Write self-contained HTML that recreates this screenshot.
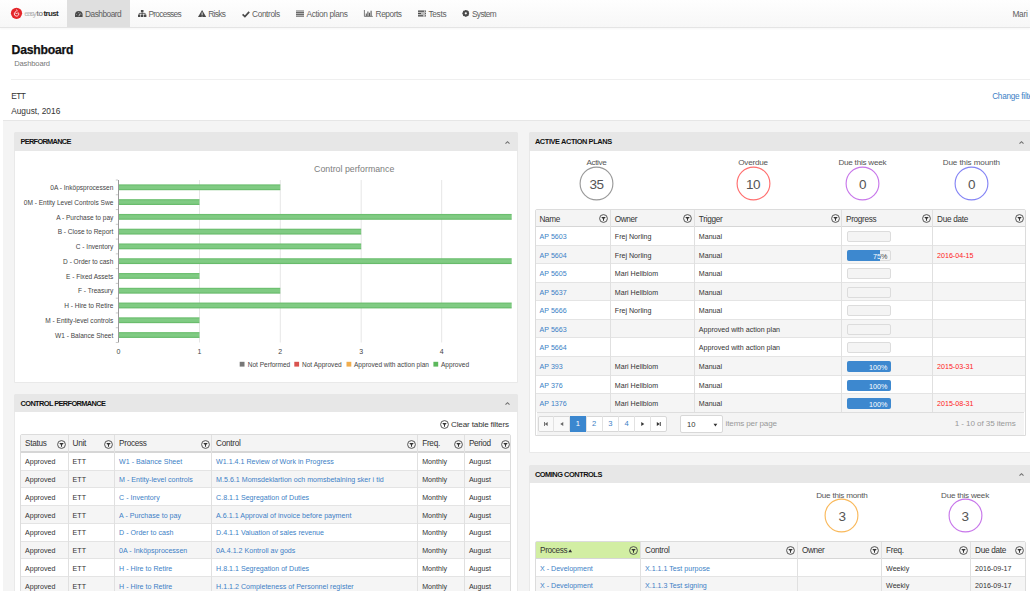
<!DOCTYPE html>
<html><head><meta charset="utf-8"><style>
html,body{margin:0;padding:0;}
body{width:1030px;height:591px;overflow:hidden;position:relative;background:#fff;font-family:"Liberation Sans", sans-serif;}
.t{position:absolute;white-space:nowrap;line-height:1;}
.r{position:absolute;}
svg{overflow:visible;display:block}
</style></head><body>
<div class="r" style="left:0.00px;top:0.00px;width:1030.00px;height:27.00px;background:linear-gradient(#fefefe,#f7f7f7);border-bottom:1px solid #e4e4e4;box-shadow:0 1px 2px rgba(0,0,0,0.04)"></div>
<div class="r" style="left:67.00px;top:0.00px;width:63.00px;height:27.00px;background:#dfdfdf"></div>
<svg class="r" style="left:10px;top:7px" width="13" height="13" viewBox="0 0 13 13"><circle cx="6.5" cy="6.3" r="5.6" fill="#e4262a"/><path d="M6.6 2.6 C7.6 3.4 6.6 4.2 5.9 4.6 C4.4 5.4 4 6.8 4.6 8 C5.3 9.4 7.7 9.5 8.5 8.1 C9.1 7 8.6 5.6 7.6 5.1" fill="none" stroke="#fff" stroke-width="0.9"/><path d="M5.6 7 L6.5 6 L7.4 7" fill="none" stroke="#fff" stroke-width="0.8"/></svg>
<div class="t" style="left:24.30px;top:10.00px;font-size:8px;color:#b5b5b5;font-weight:normal;letter-spacing:-1.475px;">easy</div>
<div class="t" style="left:36.40px;top:10.00px;font-size:8px;color:#666;font-weight:normal;letter-spacing:-0.136px;">to</div>
<div class="t" style="left:43.40px;top:10.00px;font-size:8px;color:#2a2a2a;font-weight:bold;letter-spacing:-0.636px;">trust</div>
<svg class="r" style="left:74.8px;top:10.8px" width="8" height="7" viewBox="0 0 8 7"><path d="M0 6.1 V3.8 A3.8 3.8 0 0 1 7.6 3.8 V6.1 Z" fill="#4a4a4a"/><path d="M3.8 5.2 L5.3 2.4" stroke="#dcdcdc" stroke-width="0.8"/><circle cx="1.6" cy="3.6" r="0.45" fill="#dcdcdc"/><circle cx="3.8" cy="1.5" r="0.45" fill="#dcdcdc"/><circle cx="6" cy="3.6" r="0.45" fill="#dcdcdc"/></svg>
<div class="t" style="left:85.10px;top:10.00px;font-size:8.3px;color:#5e5e5e;font-weight:normal;letter-spacing:-0.501px;">Dashboard</div>
<svg class="r" style="left:137.8px;top:10px" width="9" height="8" viewBox="0 0 9 8"><rect x="2.9" y="0" width="2.6" height="2.3" fill="#4a4a4a"/><path d="M4.2 2.3 V3.7 M1.2 3.4 H7.2 M1.2 3.4 V4.8 M4.2 3.4 V4.8 M7.2 3.4 V4.8" stroke="#4a4a4a" stroke-width="0.8"/><rect x="0" y="4.6" width="2.4" height="2.4" fill="#4a4a4a"/><rect x="3" y="4.6" width="2.4" height="2.4" fill="#4a4a4a"/><rect x="6" y="4.6" width="2.4" height="2.4" fill="#4a4a4a"/></svg>
<div class="t" style="left:148.40px;top:10.00px;font-size:8.3px;color:#5e5e5e;font-weight:normal;letter-spacing:-0.683px;">Processes</div>
<svg class="r" style="left:197.7px;top:9.8px" width="9" height="8" viewBox="0 0 9 8"><path d="M4.1 0 L8.2 7.1 H0 Z" fill="#4a4a4a"/><path d="M4.1 2.4 V5 M4.1 5.7 V6.5" stroke="#f4f4f4" stroke-width="0.9"/></svg>
<div class="t" style="left:208.20px;top:10.00px;font-size:8.3px;color:#5e5e5e;font-weight:normal;letter-spacing:-0.618px;">Risks</div>
<svg class="r" style="left:242px;top:10.6px" width="8" height="7" viewBox="0 0 8 7"><path d="M0.6 3.4 L2.9 5.6 L7.2 0.9" fill="none" stroke="#4a4a4a" stroke-width="1.7"/></svg>
<div class="t" style="left:252.10px;top:10.00px;font-size:8.3px;color:#5e5e5e;font-weight:normal;letter-spacing:-0.401px;">Controls</div>
<svg class="r" style="left:296px;top:9.9px" width="8" height="7" viewBox="0 0 8 7"><path d="M0 1 H8 M0 2.7 H8 M0 4.4 H8 M0 6.1 H8" stroke="#6a6a6a" stroke-width="1.2"/></svg>
<div class="t" style="left:306.50px;top:10.00px;font-size:8.3px;color:#5e5e5e;font-weight:normal;letter-spacing:-0.335px;">Action plans</div>
<svg class="r" style="left:364px;top:10.1px" width="9" height="7" viewBox="0 0 9 7"><path d="M0.4 0 V6.4 H8.8" fill="none" stroke="#5a5a5a" stroke-width="0.8"/><path d="M2.3 3.6 V6 M3.9 1.5 V6 M5.5 2.8 V6 M7.1 0.8 V6" stroke="#5a5a5a" stroke-width="1.1"/></svg>
<div class="t" style="left:375.60px;top:10.00px;font-size:8.3px;color:#5e5e5e;font-weight:normal;letter-spacing:-0.437px;">Reports</div>
<svg class="r" style="left:418px;top:9.9px" width="8" height="7" viewBox="0 0 8 7"><rect x="0" y="0" width="8" height="7" fill="#bdbdbd"/><path d="M0 1.3 H6 M0 3.5 H3 M0 5.7 H5" stroke="#4a4a4a" stroke-width="1.1"/><path d="M7.2 1.3 H8 M7.2 3.5 H8 M7.2 5.7 H8" stroke="#4a4a4a" stroke-width="1.1"/></svg>
<div class="t" style="left:428.40px;top:10.00px;font-size:8.3px;color:#5e5e5e;font-weight:normal;letter-spacing:-0.294px;">Tests</div>
<svg class="r" style="left:462.3px;top:10.1px" width="8" height="7" viewBox="0 0 8 7"><circle cx="3.8" cy="3.35" r="2.3" fill="none" stroke="#4a4a4a" stroke-width="1.8"/><path d="M3.8 0 V6.7 M0.5 3.35 H7.1 M1.4 1 L6.2 5.7 M6.2 1 L1.4 5.7" stroke="#4a4a4a" stroke-width="1.2"/><circle cx="3.8" cy="3.35" r="1.1" fill="#f7f7f7"/></svg>
<div class="t" style="left:471.90px;top:10.00px;font-size:8.3px;color:#5e5e5e;font-weight:normal;letter-spacing:-0.595px;">System</div>
<div class="t" style="left:1012.40px;top:10.00px;font-size:8.3px;color:#5e5e5e;font-weight:normal;letter-spacing:-0.235px;">Mari</div>
<div class="t" style="left:11.60px;top:44.00px;font-size:12.2px;color:#111;font-weight:bold;-webkit-text-stroke:0.25px #111;letter-spacing:-0.225px;">Dashboard</div>
<div class="t" style="left:14.20px;top:60.00px;font-size:7.6px;color:#777;font-weight:normal;letter-spacing:-0.164px;">Dashboard</div>
<div class="r" style="left:11.00px;top:79.00px;width:1019.00px;height:1.00px;background:#efefef"></div>
<div class="t" style="left:11.20px;top:92.00px;font-size:8.4px;color:#333;font-weight:normal;letter-spacing:-0.522px;">ETT</div>
<div class="t" style="left:11.20px;top:107.00px;font-size:8.33px;color:#333;font-weight:normal;">August, 2016</div>
<div class="t" style="left:992.20px;top:93.00px;font-size:8.2px;color:#3d7fc6;font-weight:normal;letter-spacing:-0.262px;">Change filter</div>
<div class="r" style="left:3.00px;top:120.00px;width:1027.00px;height:471.00px;background:#f4f4f4;border-top:1px solid #e6e6e6;box-sizing:border-box"></div>
<div class="r" style="left:14.00px;top:132.00px;width:504.00px;height:251.00px;background:#fff;border:1px solid #e9e9e9;box-sizing:border-box;border-radius:2px 2px 0 0"></div>
<div class="r" style="left:14.00px;top:132.00px;width:504.00px;height:19.00px;background:#e7e7e7;border-radius:2px 2px 0 0"></div>
<div class="t" style="left:20.50px;top:138.00px;font-size:7.4px;color:#111;font-weight:bold;letter-spacing:-0.697px;">PERFORMANCE</div>
<svg class="r" style="left:504.60px;top:140.70px" width="5" height="3" viewBox="0 0 5 3"><path d="M0.5 2.6 L2.5 0.7 L4.5 2.6" fill="none" stroke="#707070" stroke-width="1.1"/></svg>
<svg class="r" style="left:0;top:0" width="1030" height="591" viewBox="0 0 1030 591" font-family='"Liberation Sans", sans-serif'><line x1="199.50" y1="180" x2="199.50" y2="342.5" stroke="#e6e6e6" stroke-width="1"/><line x1="280.30" y1="180" x2="280.30" y2="342.5" stroke="#e6e6e6" stroke-width="1"/><line x1="361.20" y1="180" x2="361.20" y2="342.5" stroke="#e6e6e6" stroke-width="1"/><line x1="441.70" y1="180" x2="441.70" y2="342.5" stroke="#e6e6e6" stroke-width="1"/><defs><linearGradient id="bg" x1="0" y1="0" x2="0" y2="1"><stop offset="0" stop-color="#62b965"/><stop offset="0.3" stop-color="#80cb83"/><stop offset="0.7" stop-color="#80cb83"/><stop offset="1" stop-color="#5db460"/></linearGradient></defs><line x1="118.5" y1="180" x2="118.5" y2="342.5" stroke="#9a9a9a" stroke-width="1"/><line x1="115.8" y1="180.00" x2="118" y2="180.00" stroke="#bbb" stroke-width="0.8"/><line x1="115.8" y1="194.77" x2="118" y2="194.77" stroke="#bbb" stroke-width="0.8"/><line x1="115.8" y1="209.55" x2="118" y2="209.55" stroke="#bbb" stroke-width="0.8"/><line x1="115.8" y1="224.32" x2="118" y2="224.32" stroke="#bbb" stroke-width="0.8"/><line x1="115.8" y1="239.09" x2="118" y2="239.09" stroke="#bbb" stroke-width="0.8"/><line x1="115.8" y1="253.86" x2="118" y2="253.86" stroke="#bbb" stroke-width="0.8"/><line x1="115.8" y1="268.64" x2="118" y2="268.64" stroke="#bbb" stroke-width="0.8"/><line x1="115.8" y1="283.41" x2="118" y2="283.41" stroke="#bbb" stroke-width="0.8"/><line x1="115.8" y1="298.18" x2="118" y2="298.18" stroke="#bbb" stroke-width="0.8"/><line x1="115.8" y1="312.95" x2="118" y2="312.95" stroke="#bbb" stroke-width="0.8"/><line x1="115.8" y1="327.73" x2="118" y2="327.73" stroke="#bbb" stroke-width="0.8"/><line x1="115.8" y1="342.50" x2="118" y2="342.50" stroke="#bbb" stroke-width="0.8"/><rect x="119" y="184.40" width="161.30" height="5.8" fill="url(#bg)"/><text x="113.3" y="190.00" text-anchor="end" font-size="6.55" fill="#444">0A - Inköpsprocessen</text><rect x="119" y="199.17" width="80.50" height="5.8" fill="url(#bg)"/><text x="113.3" y="204.77" text-anchor="end" font-size="6.55" fill="#444">0M - Entity Level Controls Swe</text><rect x="119" y="213.95" width="392.70" height="5.8" fill="url(#bg)"/><text x="113.3" y="219.55" text-anchor="end" font-size="6.55" fill="#444">A - Purchase to pay</text><rect x="119" y="228.72" width="242.20" height="5.8" fill="url(#bg)"/><text x="113.3" y="234.32" text-anchor="end" font-size="6.55" fill="#444">B - Close to Report</text><rect x="119" y="243.49" width="242.20" height="5.8" fill="url(#bg)"/><text x="113.3" y="249.09" text-anchor="end" font-size="6.55" fill="#444">C - Inventory</text><rect x="119" y="258.26" width="392.70" height="5.8" fill="url(#bg)"/><text x="113.3" y="263.86" text-anchor="end" font-size="6.55" fill="#444">D - Order to cash</text><rect x="119" y="273.04" width="80.50" height="5.8" fill="url(#bg)"/><text x="113.3" y="278.64" text-anchor="end" font-size="6.55" fill="#444">E - Fixed Assets</text><rect x="119" y="287.81" width="161.30" height="5.8" fill="url(#bg)"/><text x="113.3" y="293.41" text-anchor="end" font-size="6.55" fill="#444">F - Treasury</text><rect x="119" y="302.58" width="392.70" height="5.8" fill="url(#bg)"/><text x="113.3" y="308.18" text-anchor="end" font-size="6.55" fill="#444">H - Hire to Retire</text><rect x="119" y="317.35" width="80.50" height="5.8" fill="url(#bg)"/><text x="113.3" y="322.95" text-anchor="end" font-size="6.55" fill="#444">M - Entity-level controls</text><rect x="119" y="332.13" width="80.50" height="5.8" fill="url(#bg)"/><text x="113.3" y="337.73" text-anchor="end" font-size="6.55" fill="#444">W1 - Balance Sheet</text><text x="118.50" y="354.2" text-anchor="middle" font-size="7" fill="#444">0</text><text x="199.50" y="354.2" text-anchor="middle" font-size="7" fill="#444">1</text><text x="280.30" y="354.2" text-anchor="middle" font-size="7" fill="#444">2</text><text x="361.20" y="354.2" text-anchor="middle" font-size="7" fill="#444">3</text><text x="441.70" y="354.2" text-anchor="middle" font-size="7" fill="#444">4</text><text x="354.2" y="172.4" text-anchor="middle" font-size="8.8" fill="#7d7d7d">Control performance</text><rect x="239.7" y="361.8" width="4.8" height="4.8" fill="#777"/><text x="247.7" y="366.6" font-size="6.55" fill="#444">Not Performed</text><rect x="294.3" y="361.8" width="4.8" height="4.8" fill="#d9534f"/><text x="302" y="366.6" font-size="6.55" fill="#444">Not Approved</text><rect x="346.5" y="361.8" width="4.8" height="4.8" fill="#f0ad4e"/><text x="354" y="366.6" font-size="6.55" fill="#444">Approved with action plan</text><rect x="433.4" y="361.8" width="4.8" height="4.8" fill="#5cb85c"/><text x="441" y="366.6" font-size="6.55" fill="#444">Approved</text></svg>
<div class="r" style="left:14.00px;top:394.00px;width:504.00px;height:206.00px;background:#fff;border:1px solid #e9e9e9;box-sizing:border-box;border-radius:2px 2px 0 0"></div>
<div class="r" style="left:14.00px;top:394.00px;width:504.00px;height:18.00px;background:#e7e7e7;border-radius:2px 2px 0 0"></div>
<div class="t" style="left:20.50px;top:400.00px;font-size:7.4px;color:#111;font-weight:bold;letter-spacing:-0.604px;">CONTROL PERFORMANCE</div>
<svg class="r" style="left:504.60px;top:402.20px" width="5" height="3" viewBox="0 0 5 3"><path d="M0.5 2.6 L2.5 0.7 L4.5 2.6" fill="none" stroke="#707070" stroke-width="1.1"/></svg>
<div class="r" style="left:439.80px;top:420.00px;width:9px;height:9px"><svg width="9" height="9" viewBox="0 0 9 9"><circle cx="4.5" cy="4.5" r="3.9" fill="none" stroke="#444" stroke-width="0.9"/><path d="M2.2 3 H6.8 L5 5.1 V6.6 L4 6.9 V5.1 Z" fill="#333"/></svg></div>
<div class="t" style="left:451.00px;top:421.00px;font-size:8.1px;color:#333;font-weight:normal;letter-spacing:-0.151px;">Clear table filters</div>
<div class="r" style="left:20.40px;top:434.30px;width:491.00px;height:165.70px;background:#fff;border:1px solid #dcdcdc;box-sizing:border-box;border-radius:2px 2px 0 0"></div>
<div class="r" style="left:21.40px;top:435.30px;width:489.00px;height:17.00px;background:#f4f4f4"></div>
<div class="r" style="left:21.40px;top:470.05px;width:489.00px;height:17.75px;background:#f5f5f5"></div>
<div class="r" style="left:21.40px;top:469.55px;width:489.00px;height:1.00px;background:#e4e4e4"></div>
<div class="r" style="left:21.40px;top:487.30px;width:489.00px;height:1.00px;background:#e4e4e4"></div>
<div class="r" style="left:21.40px;top:505.55px;width:489.00px;height:17.75px;background:#f5f5f5"></div>
<div class="r" style="left:21.40px;top:505.05px;width:489.00px;height:1.00px;background:#e4e4e4"></div>
<div class="r" style="left:21.40px;top:522.80px;width:489.00px;height:1.00px;background:#e4e4e4"></div>
<div class="r" style="left:21.40px;top:541.05px;width:489.00px;height:17.75px;background:#f5f5f5"></div>
<div class="r" style="left:21.40px;top:540.55px;width:489.00px;height:1.00px;background:#e4e4e4"></div>
<div class="r" style="left:21.40px;top:558.30px;width:489.00px;height:1.00px;background:#e4e4e4"></div>
<div class="r" style="left:21.40px;top:576.55px;width:489.00px;height:17.75px;background:#f5f5f5"></div>
<div class="r" style="left:21.40px;top:576.05px;width:489.00px;height:1.00px;background:#e4e4e4"></div>
<div class="r" style="left:21.40px;top:593.80px;width:489.00px;height:1.00px;background:#e4e4e4"></div>
<div class="r" style="left:21.40px;top:451.30px;width:489.00px;height:1.60px;background:#d6d6d6"></div>
<div class="r" style="left:67.50px;top:435.30px;width:1.00px;height:164.70px;background:#e0e0e0"></div>
<div class="r" style="left:114.00px;top:435.30px;width:1.00px;height:164.70px;background:#e0e0e0"></div>
<div class="r" style="left:211.00px;top:435.30px;width:1.00px;height:164.70px;background:#e0e0e0"></div>
<div class="r" style="left:417.10px;top:435.30px;width:1.00px;height:164.70px;background:#e0e0e0"></div>
<div class="r" style="left:463.80px;top:435.30px;width:1.00px;height:164.70px;background:#e0e0e0"></div>
<div class="t" style="left:25.00px;top:440.00px;font-size:8.2px;color:#333;font-weight:normal;letter-spacing:-0.283px;">Status</div>
<div class="t" style="left:72.60px;top:440.00px;font-size:8.2px;color:#333;font-weight:normal;letter-spacing:-0.267px;">Unit</div>
<div class="t" style="left:119.10px;top:440.00px;font-size:8.2px;color:#333;font-weight:normal;letter-spacing:-0.310px;">Process</div>
<div class="t" style="left:216.10px;top:440.00px;font-size:8.2px;color:#333;font-weight:normal;letter-spacing:-0.276px;">Control</div>
<div class="t" style="left:422.20px;top:440.00px;font-size:8.2px;color:#333;font-weight:normal;letter-spacing:-0.280px;">Freq.</div>
<div class="t" style="left:468.90px;top:440.00px;font-size:8.2px;color:#333;font-weight:normal;letter-spacing:-0.289px;">Period</div>
<div class="r" style="left:56.90px;top:439.60px;width:9px;height:9px"><svg width="9" height="9" viewBox="0 0 9 9"><circle cx="4.5" cy="4.5" r="3.9" fill="none" stroke="#444" stroke-width="0.9"/><path d="M2.2 3 H6.8 L5 5.1 V6.6 L4 6.9 V5.1 Z" fill="#333"/></svg></div>
<div class="r" style="left:103.80px;top:439.60px;width:9px;height:9px"><svg width="9" height="9" viewBox="0 0 9 9"><circle cx="4.5" cy="4.5" r="3.9" fill="none" stroke="#444" stroke-width="0.9"/><path d="M2.2 3 H6.8 L5 5.1 V6.6 L4 6.9 V5.1 Z" fill="#333"/></svg></div>
<div class="r" style="left:200.70px;top:439.60px;width:9px;height:9px"><svg width="9" height="9" viewBox="0 0 9 9"><circle cx="4.5" cy="4.5" r="3.9" fill="none" stroke="#444" stroke-width="0.9"/><path d="M2.2 3 H6.8 L5 5.1 V6.6 L4 6.9 V5.1 Z" fill="#333"/></svg></div>
<div class="r" style="left:406.80px;top:439.60px;width:9px;height:9px"><svg width="9" height="9" viewBox="0 0 9 9"><circle cx="4.5" cy="4.5" r="3.9" fill="none" stroke="#444" stroke-width="0.9"/><path d="M2.2 3 H6.8 L5 5.1 V6.6 L4 6.9 V5.1 Z" fill="#333"/></svg></div>
<div class="r" style="left:453.70px;top:439.60px;width:9px;height:9px"><svg width="9" height="9" viewBox="0 0 9 9"><circle cx="4.5" cy="4.5" r="3.9" fill="none" stroke="#444" stroke-width="0.9"/><path d="M2.2 3 H6.8 L5 5.1 V6.6 L4 6.9 V5.1 Z" fill="#333"/></svg></div>
<div class="r" style="left:500.50px;top:439.60px;width:9px;height:9px"><svg width="9" height="9" viewBox="0 0 9 9"><circle cx="4.5" cy="4.5" r="3.9" fill="none" stroke="#444" stroke-width="0.9"/><path d="M2.2 3 H6.8 L5 5.1 V6.6 L4 6.9 V5.1 Z" fill="#333"/></svg></div>
<div class="t" style="left:25.00px;top:459.00px;font-size:7.1px;color:#333;font-weight:normal;">Approved</div>
<div class="t" style="left:72.60px;top:459.00px;font-size:7.1px;color:#333;font-weight:normal;">ETT</div>
<div class="t" style="left:119.10px;top:459.00px;font-size:7.1px;color:#3d7fc6;font-weight:normal;">W1 - Balance Sheet</div>
<div class="t" style="left:216.10px;top:459.00px;font-size:7.1px;color:#3d7fc6;font-weight:normal;">W1.1.4.1 Review of Work in Progress</div>
<div class="t" style="left:422.20px;top:459.00px;font-size:7.1px;color:#333;font-weight:normal;">Monthly</div>
<div class="t" style="left:468.90px;top:459.00px;font-size:7.1px;color:#333;font-weight:normal;">August</div>
<div class="t" style="left:25.00px;top:477.00px;font-size:7.1px;color:#333;font-weight:normal;">Approved</div>
<div class="t" style="left:72.60px;top:477.00px;font-size:7.1px;color:#333;font-weight:normal;">ETT</div>
<div class="t" style="left:119.10px;top:477.00px;font-size:7.1px;color:#3d7fc6;font-weight:normal;">M - Entity-level controls</div>
<div class="t" style="left:216.10px;top:477.00px;font-size:7.1px;color:#3d7fc6;font-weight:normal;">M.5.6.1 Momsdeklartion och momsbetalning sker i tid</div>
<div class="t" style="left:422.20px;top:477.00px;font-size:7.1px;color:#333;font-weight:normal;">Monthly</div>
<div class="t" style="left:468.90px;top:477.00px;font-size:7.1px;color:#333;font-weight:normal;">August</div>
<div class="t" style="left:25.00px;top:495.00px;font-size:7.1px;color:#333;font-weight:normal;">Approved</div>
<div class="t" style="left:72.60px;top:495.00px;font-size:7.1px;color:#333;font-weight:normal;">ETT</div>
<div class="t" style="left:119.10px;top:495.00px;font-size:7.1px;color:#3d7fc6;font-weight:normal;">C - Inventory</div>
<div class="t" style="left:216.10px;top:495.00px;font-size:7.1px;color:#3d7fc6;font-weight:normal;">C.8.1.1 Segregation of Duties</div>
<div class="t" style="left:422.20px;top:495.00px;font-size:7.1px;color:#333;font-weight:normal;">Monthly</div>
<div class="t" style="left:468.90px;top:495.00px;font-size:7.1px;color:#333;font-weight:normal;">August</div>
<div class="t" style="left:25.00px;top:513.00px;font-size:7.1px;color:#333;font-weight:normal;">Approved</div>
<div class="t" style="left:72.60px;top:513.00px;font-size:7.1px;color:#333;font-weight:normal;">ETT</div>
<div class="t" style="left:119.10px;top:513.00px;font-size:7.1px;color:#3d7fc6;font-weight:normal;">A - Purchase to pay</div>
<div class="t" style="left:216.10px;top:513.00px;font-size:7.1px;color:#3d7fc6;font-weight:normal;">A.6.1.1 Approval of invoice before payment</div>
<div class="t" style="left:422.20px;top:513.00px;font-size:7.1px;color:#333;font-weight:normal;">Monthly</div>
<div class="t" style="left:468.90px;top:513.00px;font-size:7.1px;color:#333;font-weight:normal;">August</div>
<div class="t" style="left:25.00px;top:530.00px;font-size:7.1px;color:#333;font-weight:normal;">Approved</div>
<div class="t" style="left:72.60px;top:530.00px;font-size:7.1px;color:#333;font-weight:normal;">ETT</div>
<div class="t" style="left:119.10px;top:530.00px;font-size:7.1px;color:#3d7fc6;font-weight:normal;">D - Order to cash</div>
<div class="t" style="left:216.10px;top:530.00px;font-size:7.1px;color:#3d7fc6;font-weight:normal;">D.4.1.1 Valuation of sales revenue</div>
<div class="t" style="left:422.20px;top:530.00px;font-size:7.1px;color:#333;font-weight:normal;">Monthly</div>
<div class="t" style="left:468.90px;top:530.00px;font-size:7.1px;color:#333;font-weight:normal;">August</div>
<div class="t" style="left:25.00px;top:548.00px;font-size:7.1px;color:#333;font-weight:normal;">Approved</div>
<div class="t" style="left:72.60px;top:548.00px;font-size:7.1px;color:#333;font-weight:normal;">ETT</div>
<div class="t" style="left:119.10px;top:548.00px;font-size:7.1px;color:#3d7fc6;font-weight:normal;">0A - Inköpsprocessen</div>
<div class="t" style="left:216.10px;top:548.00px;font-size:7.1px;color:#3d7fc6;font-weight:normal;">0A.4.1.2 Kontroll av gods</div>
<div class="t" style="left:422.20px;top:548.00px;font-size:7.1px;color:#333;font-weight:normal;">Monthly</div>
<div class="t" style="left:468.90px;top:548.00px;font-size:7.1px;color:#333;font-weight:normal;">August</div>
<div class="t" style="left:25.00px;top:566.00px;font-size:7.1px;color:#333;font-weight:normal;">Approved</div>
<div class="t" style="left:72.60px;top:566.00px;font-size:7.1px;color:#333;font-weight:normal;">ETT</div>
<div class="t" style="left:119.10px;top:566.00px;font-size:7.1px;color:#3d7fc6;font-weight:normal;">H - Hire to Retire</div>
<div class="t" style="left:216.10px;top:566.00px;font-size:7.1px;color:#3d7fc6;font-weight:normal;">H.8.1.1 Segregation of Duties</div>
<div class="t" style="left:422.20px;top:566.00px;font-size:7.1px;color:#333;font-weight:normal;">Monthly</div>
<div class="t" style="left:468.90px;top:566.00px;font-size:7.1px;color:#333;font-weight:normal;">August</div>
<div class="t" style="left:25.00px;top:584.00px;font-size:7.1px;color:#333;font-weight:normal;">Approved</div>
<div class="t" style="left:72.60px;top:584.00px;font-size:7.1px;color:#333;font-weight:normal;">ETT</div>
<div class="t" style="left:119.10px;top:584.00px;font-size:7.1px;color:#3d7fc6;font-weight:normal;">H - Hire to Retire</div>
<div class="t" style="left:216.10px;top:584.00px;font-size:7.1px;color:#3d7fc6;font-weight:normal;">H.1.1.2 Completeness of Personnel register</div>
<div class="t" style="left:422.20px;top:584.00px;font-size:7.1px;color:#333;font-weight:normal;">Monthly</div>
<div class="t" style="left:468.90px;top:584.00px;font-size:7.1px;color:#333;font-weight:normal;">August</div>
<div class="t" style="left:25.00px;top:601.00px;font-size:7.1px;color:#333;font-weight:normal;">Approved</div>
<div class="t" style="left:72.60px;top:601.00px;font-size:7.1px;color:#333;font-weight:normal;">ETT</div>
<div class="t" style="left:119.10px;top:601.00px;font-size:7.1px;color:#3d7fc6;font-weight:normal;">H - Hire to Retire</div>
<div class="t" style="left:216.10px;top:601.00px;font-size:7.1px;color:#3d7fc6;font-weight:normal;">H.1.1.3 Something</div>
<div class="t" style="left:422.20px;top:601.00px;font-size:7.1px;color:#333;font-weight:normal;">Monthly</div>
<div class="t" style="left:468.90px;top:601.00px;font-size:7.1px;color:#333;font-weight:normal;">August</div>
<div class="r" style="left:529.00px;top:132.00px;width:503.50px;height:321.00px;background:#fff;border:1px solid #e9e9e9;box-sizing:border-box;border-radius:2px 2px 0 0"></div>
<div class="r" style="left:529.00px;top:132.00px;width:503.50px;height:19.00px;background:#e7e7e7;border-radius:2px 2px 0 0"></div>
<div class="t" style="left:534.90px;top:138.00px;font-size:7.4px;color:#111;font-weight:bold;letter-spacing:-0.396px;">ACTIVE ACTION PLANS</div>
<svg class="r" style="left:1019.10px;top:140.70px" width="5" height="3" viewBox="0 0 5 3"><path d="M0.5 2.6 L2.5 0.7 L4.5 2.6" fill="none" stroke="#707070" stroke-width="1.1"/></svg>
<div class="t" style="left:396.40px;width:400px;text-align:center;top:159.00px;font-size:8.1px;color:#555;font-weight:normal;letter-spacing:-0.343px;">Active</div>
<svg class="r" style="left:578.90px;top:166.30px" width="35" height="35" viewBox="0 0 35 35"><circle cx="17.5" cy="17.5" r="16.4" fill="none" stroke="#9a9a9a" stroke-width="1.15"/></svg>
<div class="t" style="left:396.40px;width:400px;text-align:center;top:178.00px;font-size:13.5px;color:#555;font-weight:normal;letter-spacing:-0.612px;">35</div>
<div class="t" style="left:553.00px;width:400px;text-align:center;top:159.00px;font-size:8.1px;color:#555;font-weight:normal;letter-spacing:-0.224px;">Overdue</div>
<svg class="r" style="left:735.50px;top:166.30px" width="35" height="35" viewBox="0 0 35 35"><circle cx="17.5" cy="17.5" r="16.4" fill="none" stroke="#ff6f6f" stroke-width="1.15"/></svg>
<div class="t" style="left:553.00px;width:400px;text-align:center;top:178.00px;font-size:13.5px;color:#555;font-weight:normal;letter-spacing:-0.612px;">10</div>
<div class="t" style="left:662.40px;width:400px;text-align:center;top:159.00px;font-size:8.1px;color:#555;font-weight:normal;letter-spacing:-0.221px;">Due this week</div>
<svg class="r" style="left:844.90px;top:166.30px" width="35" height="35" viewBox="0 0 35 35"><circle cx="17.5" cy="17.5" r="16.4" fill="none" stroke="#c878ea" stroke-width="1.15"/></svg>
<div class="t" style="left:662.40px;width:400px;text-align:center;top:178.00px;font-size:13.5px;color:#555;font-weight:normal;letter-spacing:-0.612px;">0</div>
<div class="t" style="left:771.40px;width:400px;text-align:center;top:159.00px;font-size:8.1px;color:#555;font-weight:normal;letter-spacing:-0.112px;">Due this mounth</div>
<svg class="r" style="left:953.90px;top:166.30px" width="35" height="35" viewBox="0 0 35 35"><circle cx="17.5" cy="17.5" r="16.4" fill="none" stroke="#8585f5" stroke-width="1.15"/></svg>
<div class="t" style="left:771.40px;width:400px;text-align:center;top:178.00px;font-size:13.5px;color:#555;font-weight:normal;letter-spacing:-0.612px;">0</div>
<div class="r" style="left:535.00px;top:209.00px;width:490.50px;height:227.00px;background:#fff;border:1px solid #dcdcdc;box-sizing:border-box;border-radius:2px 2px 0 0"></div>
<div class="r" style="left:536.00px;top:210.00px;width:488.50px;height:16.60px;background:#f4f4f4"></div>
<div class="r" style="left:536.00px;top:245.15px;width:488.50px;height:18.55px;background:#f5f5f5"></div>
<div class="r" style="left:536.00px;top:244.65px;width:488.50px;height:1.00px;background:#e4e4e4"></div>
<div class="r" style="left:536.00px;top:263.20px;width:488.50px;height:1.00px;background:#e4e4e4"></div>
<div class="r" style="left:536.00px;top:282.25px;width:488.50px;height:18.55px;background:#f5f5f5"></div>
<div class="r" style="left:536.00px;top:281.75px;width:488.50px;height:1.00px;background:#e4e4e4"></div>
<div class="r" style="left:536.00px;top:300.30px;width:488.50px;height:1.00px;background:#e4e4e4"></div>
<div class="r" style="left:536.00px;top:319.35px;width:488.50px;height:18.55px;background:#f5f5f5"></div>
<div class="r" style="left:536.00px;top:318.85px;width:488.50px;height:1.00px;background:#e4e4e4"></div>
<div class="r" style="left:536.00px;top:337.40px;width:488.50px;height:1.00px;background:#e4e4e4"></div>
<div class="r" style="left:536.00px;top:356.45px;width:488.50px;height:18.55px;background:#f5f5f5"></div>
<div class="r" style="left:536.00px;top:355.95px;width:488.50px;height:1.00px;background:#e4e4e4"></div>
<div class="r" style="left:536.00px;top:374.50px;width:488.50px;height:1.00px;background:#e4e4e4"></div>
<div class="r" style="left:536.00px;top:393.55px;width:488.50px;height:18.55px;background:#f5f5f5"></div>
<div class="r" style="left:536.00px;top:393.05px;width:488.50px;height:1.00px;background:#e4e4e4"></div>
<div class="r" style="left:536.00px;top:225.60px;width:488.50px;height:1.60px;background:#d6d6d6"></div>
<div class="r" style="left:609.70px;top:210.00px;width:1.00px;height:225.00px;background:#e0e0e0"></div>
<div class="r" style="left:693.70px;top:210.00px;width:1.00px;height:225.00px;background:#e0e0e0"></div>
<div class="r" style="left:840.90px;top:210.00px;width:1.00px;height:225.00px;background:#e0e0e0"></div>
<div class="r" style="left:932.00px;top:210.00px;width:1.00px;height:225.00px;background:#e0e0e0"></div>
<div class="t" style="left:539.60px;top:216.00px;font-size:8.2px;color:#333;font-weight:normal;letter-spacing:-0.400px;">Name</div>
<div class="t" style="left:614.80px;top:216.00px;font-size:8.2px;color:#333;font-weight:normal;letter-spacing:-0.353px;">Owner</div>
<div class="t" style="left:698.80px;top:216.00px;font-size:8.2px;color:#333;font-weight:normal;letter-spacing:-0.268px;">Trigger</div>
<div class="t" style="left:846.00px;top:216.00px;font-size:8.2px;color:#333;font-weight:normal;letter-spacing:-0.300px;">Progress</div>
<div class="t" style="left:937.10px;top:216.00px;font-size:8.2px;color:#333;font-weight:normal;letter-spacing:-0.304px;">Due date</div>
<div class="r" style="left:598.90px;top:214.10px;width:9px;height:9px"><svg width="9" height="9" viewBox="0 0 9 9"><circle cx="4.5" cy="4.5" r="3.9" fill="none" stroke="#444" stroke-width="0.9"/><path d="M2.2 3 H6.8 L5 5.1 V6.6 L4 6.9 V5.1 Z" fill="#333"/></svg></div>
<div class="r" style="left:683.20px;top:214.10px;width:9px;height:9px"><svg width="9" height="9" viewBox="0 0 9 9"><circle cx="4.5" cy="4.5" r="3.9" fill="none" stroke="#444" stroke-width="0.9"/><path d="M2.2 3 H6.8 L5 5.1 V6.6 L4 6.9 V5.1 Z" fill="#333"/></svg></div>
<div class="r" style="left:830.80px;top:214.10px;width:9px;height:9px"><svg width="9" height="9" viewBox="0 0 9 9"><circle cx="4.5" cy="4.5" r="3.9" fill="none" stroke="#444" stroke-width="0.9"/><path d="M2.2 3 H6.8 L5 5.1 V6.6 L4 6.9 V5.1 Z" fill="#333"/></svg></div>
<div class="r" style="left:921.50px;top:214.10px;width:9px;height:9px"><svg width="9" height="9" viewBox="0 0 9 9"><circle cx="4.5" cy="4.5" r="3.9" fill="none" stroke="#444" stroke-width="0.9"/><path d="M2.2 3 H6.8 L5 5.1 V6.6 L4 6.9 V5.1 Z" fill="#333"/></svg></div>
<div class="r" style="left:1014.90px;top:214.10px;width:9px;height:9px"><svg width="9" height="9" viewBox="0 0 9 9"><circle cx="4.5" cy="4.5" r="3.9" fill="none" stroke="#444" stroke-width="0.9"/><path d="M2.2 3 H6.8 L5 5.1 V6.6 L4 6.9 V5.1 Z" fill="#333"/></svg></div>
<div class="t" style="left:539.60px;top:234.00px;font-size:7.1px;color:#3d7fc6;font-weight:normal;">AP 5603</div>
<div class="t" style="left:614.80px;top:234.00px;font-size:7.1px;color:#333;font-weight:normal;">Frej Norling</div>
<div class="t" style="left:698.80px;top:234.00px;font-size:7.1px;color:#333;font-weight:normal;">Manual</div>
<div class="t" style="left:937.10px;top:234.00px;font-size:7.1px;color:#f22;font-weight:normal;"></div>
<div class="t" style="left:539.60px;top:253.00px;font-size:7.1px;color:#3d7fc6;font-weight:normal;">AP 5604</div>
<div class="t" style="left:614.80px;top:253.00px;font-size:7.1px;color:#333;font-weight:normal;">Frej Norling</div>
<div class="t" style="left:698.80px;top:253.00px;font-size:7.1px;color:#333;font-weight:normal;">Manual</div>
<div class="t" style="left:937.10px;top:253.00px;font-size:7.1px;color:#f22;font-weight:normal;">2016-04-15</div>
<div class="t" style="left:539.60px;top:271.00px;font-size:7.1px;color:#3d7fc6;font-weight:normal;">AP 5605</div>
<div class="t" style="left:614.80px;top:271.00px;font-size:7.1px;color:#333;font-weight:normal;">Mari Hellblom</div>
<div class="t" style="left:698.80px;top:271.00px;font-size:7.1px;color:#333;font-weight:normal;">Manual</div>
<div class="t" style="left:937.10px;top:271.00px;font-size:7.1px;color:#f22;font-weight:normal;"></div>
<div class="t" style="left:539.60px;top:290.00px;font-size:7.1px;color:#3d7fc6;font-weight:normal;">AP 5637</div>
<div class="t" style="left:614.80px;top:290.00px;font-size:7.1px;color:#333;font-weight:normal;">Mari Hellblom</div>
<div class="t" style="left:698.80px;top:290.00px;font-size:7.1px;color:#333;font-weight:normal;">Manual</div>
<div class="t" style="left:937.10px;top:290.00px;font-size:7.1px;color:#f22;font-weight:normal;"></div>
<div class="t" style="left:539.60px;top:308.00px;font-size:7.1px;color:#3d7fc6;font-weight:normal;">AP 5666</div>
<div class="t" style="left:614.80px;top:308.00px;font-size:7.1px;color:#333;font-weight:normal;">Frej Norling</div>
<div class="t" style="left:698.80px;top:308.00px;font-size:7.1px;color:#333;font-weight:normal;">Manual</div>
<div class="t" style="left:937.10px;top:308.00px;font-size:7.1px;color:#f22;font-weight:normal;"></div>
<div class="t" style="left:539.60px;top:327.00px;font-size:7.1px;color:#3d7fc6;font-weight:normal;">AP 5663</div>
<div class="t" style="left:614.80px;top:327.00px;font-size:7.1px;color:#333;font-weight:normal;"></div>
<div class="t" style="left:698.80px;top:327.00px;font-size:7.1px;color:#333;font-weight:normal;">Approved with action plan</div>
<div class="t" style="left:937.10px;top:327.00px;font-size:7.1px;color:#f22;font-weight:normal;"></div>
<div class="t" style="left:539.60px;top:345.00px;font-size:7.1px;color:#3d7fc6;font-weight:normal;">AP 5664</div>
<div class="t" style="left:614.80px;top:345.00px;font-size:7.1px;color:#333;font-weight:normal;"></div>
<div class="t" style="left:698.80px;top:345.00px;font-size:7.1px;color:#333;font-weight:normal;">Approved with action plan</div>
<div class="t" style="left:937.10px;top:345.00px;font-size:7.1px;color:#f22;font-weight:normal;"></div>
<div class="t" style="left:539.60px;top:364.00px;font-size:7.1px;color:#3d7fc6;font-weight:normal;">AP 393</div>
<div class="t" style="left:614.80px;top:364.00px;font-size:7.1px;color:#333;font-weight:normal;">Mari Hellblom</div>
<div class="t" style="left:698.80px;top:364.00px;font-size:7.1px;color:#333;font-weight:normal;">Manual</div>
<div class="t" style="left:937.10px;top:364.00px;font-size:7.1px;color:#f22;font-weight:normal;">2015-03-31</div>
<div class="t" style="left:539.60px;top:383.00px;font-size:7.1px;color:#3d7fc6;font-weight:normal;">AP 376</div>
<div class="t" style="left:614.80px;top:383.00px;font-size:7.1px;color:#333;font-weight:normal;">Mari Hellblom</div>
<div class="t" style="left:698.80px;top:383.00px;font-size:7.1px;color:#333;font-weight:normal;">Manual</div>
<div class="t" style="left:937.10px;top:383.00px;font-size:7.1px;color:#f22;font-weight:normal;"></div>
<div class="t" style="left:539.60px;top:401.00px;font-size:7.1px;color:#3d7fc6;font-weight:normal;">AP 1376</div>
<div class="t" style="left:614.80px;top:401.00px;font-size:7.1px;color:#333;font-weight:normal;">Mari Hellblom</div>
<div class="t" style="left:698.80px;top:401.00px;font-size:7.1px;color:#333;font-weight:normal;">Manual</div>
<div class="t" style="left:937.10px;top:401.00px;font-size:7.1px;color:#f22;font-weight:normal;">2015-08-31</div>
<div class="r" style="left:536.50px;top:412.10px;width:487.80px;height:22.90px;background:#f4f4f4"></div>
<div class="r" style="left:536.50px;top:412.10px;width:487.80px;height:0.90px;background:#dedede"></div>
<div class="r" style="left:847.00px;top:231.00px;width:44.00px;height:10.50px;background:#f4f4f4;border:1px solid #dcdcdc;box-sizing:border-box;border-radius:2px"></div>
<div class="r" style="left:847.00px;top:250.00px;width:44.00px;height:10.50px;background:#f4f4f4;border:1px solid #dcdcdc;box-sizing:border-box;border-radius:2px"></div>
<div class="t" style="left:873.09px;top:253.00px;font-size:7.2px;color:#444;font-weight:normal;">75%</div>
<div class="r" style="left:847px;top:250px;width:33px;height:10.5px;overflow:hidden;background:#3d88cf;border-radius:2px 0 0 2px"><div class="t" style="left:26.09px;top:3px;font-size:7.2px;color:#fff">75%</div></div>
<div class="r" style="left:847.00px;top:268.00px;width:44.00px;height:10.50px;background:#f4f4f4;border:1px solid #dcdcdc;box-sizing:border-box;border-radius:2px"></div>
<div class="r" style="left:847.00px;top:287.00px;width:44.00px;height:10.50px;background:#f4f4f4;border:1px solid #dcdcdc;box-sizing:border-box;border-radius:2px"></div>
<div class="r" style="left:847.00px;top:305.00px;width:44.00px;height:10.50px;background:#f4f4f4;border:1px solid #dcdcdc;box-sizing:border-box;border-radius:2px"></div>
<div class="r" style="left:847.00px;top:324.00px;width:44.00px;height:10.50px;background:#f4f4f4;border:1px solid #dcdcdc;box-sizing:border-box;border-radius:2px"></div>
<div class="r" style="left:847.00px;top:342.00px;width:44.00px;height:10.50px;background:#f4f4f4;border:1px solid #dcdcdc;box-sizing:border-box;border-radius:2px"></div>
<div class="r" style="left:847.00px;top:361.00px;width:44.00px;height:10.50px;background:#f4f4f4;border:1px solid #dcdcdc;box-sizing:border-box;border-radius:2px"></div>
<div class="t" style="left:869.09px;top:364.00px;font-size:7.2px;color:#444;font-weight:normal;">100%</div>
<div class="r" style="left:847px;top:361px;width:44px;height:10.5px;overflow:hidden;background:#3d88cf;border-radius:2px"><div class="t" style="left:22.09px;top:3px;font-size:7.2px;color:#fff">100%</div></div>
<div class="r" style="left:847.00px;top:380.00px;width:44.00px;height:10.50px;background:#f4f4f4;border:1px solid #dcdcdc;box-sizing:border-box;border-radius:2px"></div>
<div class="t" style="left:869.09px;top:383.00px;font-size:7.2px;color:#444;font-weight:normal;">100%</div>
<div class="r" style="left:847px;top:380px;width:44px;height:10.5px;overflow:hidden;background:#3d88cf;border-radius:2px"><div class="t" style="left:22.09px;top:3px;font-size:7.2px;color:#fff">100%</div></div>
<div class="r" style="left:847.00px;top:398.00px;width:44.00px;height:10.50px;background:#f4f4f4;border:1px solid #dcdcdc;box-sizing:border-box;border-radius:2px"></div>
<div class="t" style="left:869.09px;top:401.00px;font-size:7.2px;color:#444;font-weight:normal;">100%</div>
<div class="r" style="left:847px;top:398px;width:44px;height:10.5px;overflow:hidden;background:#3d88cf;border-radius:2px"><div class="t" style="left:22.09px;top:3px;font-size:7.2px;color:#fff">100%</div></div>
<div class="r" style="left:537.50px;top:415.50px;width:129.50px;height:16.50px;background:#fff;border:1px solid #d8d8d8;box-sizing:border-box;border-radius:2px"></div>
<div class="r" style="left:538.50px;top:416.50px;width:14.69px;height:14.50px;background:#f9f9f9;border-radius:2px 0 0 2px"></div>
<div class="r" style="left:553.19px;top:415.50px;width:1.00px;height:16.50px;background:#e2e2e2"></div>
<div class="r" style="left:554.19px;top:416.50px;width:15.19px;height:14.50px;background:#f9f9f9"></div>
<div class="r" style="left:569.38px;top:415.50px;width:1.00px;height:16.50px;background:#e2e2e2"></div>
<div class="r" style="left:569.88px;top:415.50px;width:16.19px;height:16.50px;background:#3b87cf"></div>
<div class="r" style="left:585.56px;top:415.50px;width:1.00px;height:16.50px;background:#e2e2e2"></div>
<div class="r" style="left:601.75px;top:415.50px;width:1.00px;height:16.50px;background:#e2e2e2"></div>
<div class="r" style="left:617.94px;top:415.50px;width:1.00px;height:16.50px;background:#e2e2e2"></div>
<div class="r" style="left:634.12px;top:415.50px;width:1.00px;height:16.50px;background:#e2e2e2"></div>
<div class="r" style="left:650.31px;top:415.50px;width:1.00px;height:16.50px;background:#e2e2e2"></div>
<div class="t" style="left:377.97px;width:400px;text-align:center;top:420.00px;font-size:7.6px;color:#fff;font-weight:normal;">1</div>
<div class="t" style="left:394.16px;width:400px;text-align:center;top:420.00px;font-size:7.6px;color:#3d7fc6;font-weight:normal;">2</div>
<div class="t" style="left:410.34px;width:400px;text-align:center;top:420.00px;font-size:7.6px;color:#3d7fc6;font-weight:normal;">3</div>
<div class="t" style="left:426.53px;width:400px;text-align:center;top:420.00px;font-size:7.6px;color:#3d7fc6;font-weight:normal;">4</div>
<svg class="r" style="left:0;top:0" width="1030" height="591"><path d="M547.69 422.00 L544.69 424.00 L547.69 426.00 Z" fill="#666"/><rect x="543.99" y="422.00" width="0.9" height="4" fill="#666"/></svg>
<svg class="r" style="left:0;top:0" width="1030" height="591"><path d="M563.28 422.00 L560.28 424.00 L563.28 426.00 Z" fill="#666"/></svg>
<svg class="r" style="left:0;top:0" width="1030" height="591"><path d="M641.22 422.00 L644.22 424.00 L641.22 426.00 Z" fill="#333"/></svg>
<svg class="r" style="left:0;top:0" width="1030" height="591"><path d="M656.81 422.00 L659.81 424.00 L656.81 426.00 Z" fill="#333"/><rect x="659.81" y="422.00" width="0.9" height="4" fill="#333"/></svg>
<div class="r" style="left:680.00px;top:415.00px;width:43.00px;height:18.00px;background:#fff;border:1px solid #d8d8d8;box-sizing:border-box;border-radius:2px"></div>
<div class="t" style="left:687.00px;top:421.00px;font-size:7.6px;color:#333;font-weight:normal;">10</div>
<svg class="r" style="left:712.8px;top:422.5px" width="5" height="4"><path d="M0.5 0.8 H4.3 L2.4 3.4 Z" fill="#333"/></svg>
<div class="t" style="left:725.60px;top:420.00px;font-size:8.1px;color:#999;font-weight:normal;letter-spacing:-0.163px;">items per page</div>
<div class="t" style="right:14.40px;top:420.00px;font-size:8.1px;color:#999;font-weight:normal;letter-spacing:-0.093px;">1 - 10 of 35 items</div>
<div class="r" style="left:529.00px;top:464.50px;width:503.50px;height:135.50px;background:#fff;border:1px solid #e9e9e9;box-sizing:border-box;border-radius:2px 2px 0 0"></div>
<div class="r" style="left:529.00px;top:464.50px;width:503.50px;height:18.50px;background:#e7e7e7;border-radius:2px 2px 0 0"></div>
<div class="t" style="left:534.90px;top:471.00px;font-size:7.4px;color:#111;font-weight:bold;letter-spacing:-0.460px;">COMING CONTROLS</div>
<svg class="r" style="left:1019.10px;top:472.95px" width="5" height="3" viewBox="0 0 5 3"><path d="M0.5 2.6 L2.5 0.7 L4.5 2.6" fill="none" stroke="#707070" stroke-width="1.1"/></svg>
<div class="t" style="left:641.90px;width:400px;text-align:center;top:492.00px;font-size:8.1px;color:#555;font-weight:normal;letter-spacing:-0.213px;">Due this month</div>
<svg class="r" style="left:824.40px;top:498.40px" width="35" height="35" viewBox="0 0 35 35"><circle cx="17.5" cy="17.5" r="16.4" fill="none" stroke="#f9b95c" stroke-width="1.15"/></svg>
<div class="t" style="left:641.90px;width:400px;text-align:center;top:510.00px;font-size:13.5px;color:#555;font-weight:normal;letter-spacing:-0.612px;">3</div>
<div class="t" style="left:765.00px;width:400px;text-align:center;top:492.00px;font-size:8.1px;color:#555;font-weight:normal;letter-spacing:-0.221px;">Due this week</div>
<svg class="r" style="left:947.50px;top:498.40px" width="35" height="35" viewBox="0 0 35 35"><circle cx="17.5" cy="17.5" r="16.4" fill="none" stroke="#c878ea" stroke-width="1.15"/></svg>
<div class="t" style="left:765.00px;width:400px;text-align:center;top:510.00px;font-size:13.5px;color:#555;font-weight:normal;letter-spacing:-0.612px;">3</div>
<div class="r" style="left:535.40px;top:541.30px;width:490.20px;height:58.70px;background:#fff;border:1px solid #dcdcdc;box-sizing:border-box;border-radius:2px 2px 0 0"></div>
<div class="r" style="left:536.40px;top:542.30px;width:488.20px;height:16.60px;background:#f4f4f4"></div>
<div class="r" style="left:536.40px;top:542.30px;width:104.00px;height:16.60px;background:#d2eea3"></div>
<div class="r" style="left:536.40px;top:576.40px;width:488.20px;height:17.50px;background:#f5f5f5"></div>
<div class="r" style="left:536.40px;top:575.90px;width:488.20px;height:1.00px;background:#e4e4e4"></div>
<div class="r" style="left:536.40px;top:593.40px;width:488.20px;height:1.00px;background:#e4e4e4"></div>
<div class="r" style="left:536.40px;top:557.90px;width:488.20px;height:1.60px;background:#d6d6d6"></div>
<div class="r" style="left:639.90px;top:542.30px;width:1.00px;height:57.70px;background:#e0e0e0"></div>
<div class="r" style="left:796.90px;top:542.30px;width:1.00px;height:57.70px;background:#e0e0e0"></div>
<div class="r" style="left:881.00px;top:542.30px;width:1.00px;height:57.70px;background:#e0e0e0"></div>
<div class="r" style="left:970.00px;top:542.30px;width:1.00px;height:57.70px;background:#e0e0e0"></div>
<div class="t" style="left:540.00px;top:547.00px;font-size:8.2px;color:#333;font-weight:normal;letter-spacing:-0.310px;">Process</div>
<div class="t" style="left:645.00px;top:547.00px;font-size:8.2px;color:#333;font-weight:normal;letter-spacing:-0.276px;">Control</div>
<div class="t" style="left:802.00px;top:547.00px;font-size:8.2px;color:#333;font-weight:normal;letter-spacing:-0.353px;">Owner</div>
<div class="t" style="left:886.10px;top:547.00px;font-size:8.2px;color:#333;font-weight:normal;letter-spacing:-0.280px;">Freq.</div>
<div class="t" style="left:975.10px;top:547.00px;font-size:8.2px;color:#333;font-weight:normal;letter-spacing:-0.304px;">Due date</div>
<div class="r" style="left:629.40px;top:546.40px;width:9px;height:9px"><svg width="9" height="9" viewBox="0 0 9 9"><circle cx="4.5" cy="4.5" r="3.9" fill="none" stroke="#444" stroke-width="0.9"/><path d="M2.2 3 H6.8 L5 5.1 V6.6 L4 6.9 V5.1 Z" fill="#333"/></svg></div>
<div class="r" style="left:786.30px;top:546.40px;width:9px;height:9px"><svg width="9" height="9" viewBox="0 0 9 9"><circle cx="4.5" cy="4.5" r="3.9" fill="none" stroke="#444" stroke-width="0.9"/><path d="M2.2 3 H6.8 L5 5.1 V6.6 L4 6.9 V5.1 Z" fill="#333"/></svg></div>
<div class="r" style="left:870.10px;top:546.40px;width:9px;height:9px"><svg width="9" height="9" viewBox="0 0 9 9"><circle cx="4.5" cy="4.5" r="3.9" fill="none" stroke="#444" stroke-width="0.9"/><path d="M2.2 3 H6.8 L5 5.1 V6.6 L4 6.9 V5.1 Z" fill="#333"/></svg></div>
<div class="r" style="left:959.10px;top:546.40px;width:9px;height:9px"><svg width="9" height="9" viewBox="0 0 9 9"><circle cx="4.5" cy="4.5" r="3.9" fill="none" stroke="#444" stroke-width="0.9"/><path d="M2.2 3 H6.8 L5 5.1 V6.6 L4 6.9 V5.1 Z" fill="#333"/></svg></div>
<div class="r" style="left:1015.30px;top:546.40px;width:9px;height:9px"><svg width="9" height="9" viewBox="0 0 9 9"><circle cx="4.5" cy="4.5" r="3.9" fill="none" stroke="#444" stroke-width="0.9"/><path d="M2.2 3 H6.8 L5 5.1 V6.6 L4 6.9 V5.1 Z" fill="#333"/></svg></div>
<div class="t" style="left:540.00px;top:566.00px;font-size:7.1px;color:#3d7fc6;font-weight:normal;">X - Development</div>
<div class="t" style="left:645.00px;top:566.00px;font-size:7.1px;color:#3d7fc6;font-weight:normal;">X.1.1.1 Test purpose</div>
<div class="t" style="left:802.00px;top:566.00px;font-size:7.1px;color:#333;font-weight:normal;"></div>
<div class="t" style="left:886.10px;top:566.00px;font-size:7.1px;color:#333;font-weight:normal;">Weekly</div>
<div class="t" style="left:975.10px;top:566.00px;font-size:7.1px;color:#333;font-weight:normal;">2016-09-17</div>
<div class="t" style="left:540.00px;top:583.00px;font-size:7.1px;color:#3d7fc6;font-weight:normal;">X - Development</div>
<div class="t" style="left:645.00px;top:583.00px;font-size:7.1px;color:#3d7fc6;font-weight:normal;">X.1.1.3 Test signing</div>
<div class="t" style="left:802.00px;top:583.00px;font-size:7.1px;color:#333;font-weight:normal;"></div>
<div class="t" style="left:886.10px;top:583.00px;font-size:7.1px;color:#333;font-weight:normal;">Weekly</div>
<div class="t" style="left:975.10px;top:583.00px;font-size:7.1px;color:#333;font-weight:normal;">2016-09-17</div>
<div class="t" style="left:540.00px;top:601.00px;font-size:7.1px;color:#3d7fc6;font-weight:normal;">X - Development</div>
<div class="t" style="left:645.00px;top:601.00px;font-size:7.1px;color:#3d7fc6;font-weight:normal;">X.1.1.4 Test</div>
<div class="t" style="left:802.00px;top:601.00px;font-size:7.1px;color:#333;font-weight:normal;"></div>
<div class="t" style="left:886.10px;top:601.00px;font-size:7.1px;color:#333;font-weight:normal;">Weekly</div>
<div class="t" style="left:975.10px;top:601.00px;font-size:7.1px;color:#333;font-weight:normal;">2016-09-17</div>
<svg class="r" style="left:568px;top:548.8px" width="5" height="4"><path d="M0.3 3.3 L2.2 0.3 L4.1 3.3 Z" fill="#333"/></svg>
</body></html>
